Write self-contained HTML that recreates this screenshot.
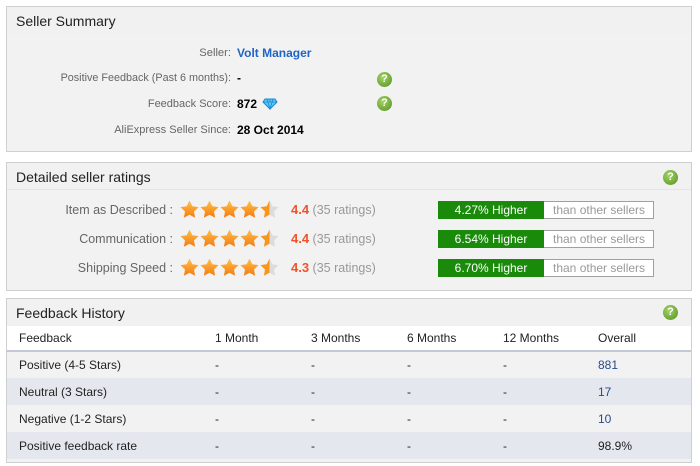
<!DOCTYPE html>
<html><head><meta charset="utf-8"><style>
*{margin:0;padding:0;box-sizing:border-box}
body{width:700px;height:466px;background:#fff;font-family:"Liberation Sans",Arial,sans-serif;position:relative;overflow:hidden}
.box{position:absolute;left:6px;width:686px;background:#f2f2f2;border:1px solid #cfcfcf}
.hd{height:27px;font-size:14px;color:#222;padding:6px 0 0 9px;background:#f1f1f1}
.a{position:absolute;font-size:12px;white-space:nowrap}
.lab{color:#666;text-align:right;width:300px;font-size:11px}
.q{position:absolute;width:15px;height:15px;border-radius:50%;background:radial-gradient(circle at 40% 35%,#a6d36a,#6aa431 70%,#558a25);color:#fff;font-size:11px;font-weight:bold;text-align:center;line-height:15px}
.bar{position:absolute;left:438px;height:18px;width:216px;border:1px solid #a0a0a0;background:#fff;font-size:12px}
.bar b{position:absolute;left:-1px;top:-1px;width:106px;height:18px;background:#1a8a0a;color:#fff;font-weight:normal;text-align:center;line-height:18px}
.bar span{position:absolute;left:114px;top:1px;color:#999}
.stars{position:absolute;left:180px}
.rl{color:#666;font-size:12.5px}
table{position:absolute;left:7px;top:326px;width:684px;border-collapse:collapse;font-size:12px;color:#222}
td{height:27px;padding:0 0 0 12px}
tr.h td{background:#fff;height:25px;border-bottom:2px solid #c2c8d6}
tr.s td{background:#e4e7ee}
</style></head><body>
<div class="box" style="top:6px;height:146px"><div class="hd">Seller Summary</div></div>
<div class="a lab" style="left:-69px;top:47px;font-size:11.2px">Seller:</div>
<div class="a" style="left:237px;top:46px;color:#1f64c4;font-weight:bold">Volt Manager</div>
<div class="a lab" style="left:-69px;top:72px;font-size:10.8px">Positive Feedback (Past 6 months):</div>
<div class="a" style="left:237px;top:71px;font-weight:bold">-</div>
<div class="a lab" style="left:-69px;top:98px">Feedback Score:</div>
<div class="a" style="left:237px;top:97px;font-weight:bold">872</div>
<svg style="position:absolute;left:262px;top:98px" width="16" height="12" viewBox="0 0 16 12"><path d="M3 1h10l2 3-7 7-7-7z" fill="#5cc8f5" stroke="#1a88d0"/><path d="M1 4h14M5 1l3 10 3-10M8 1v3" stroke="#1a88d0" fill="none" stroke-width=".8"/></svg>
<div class="a lab" style="left:-69px;top:124px">AliExpress Seller Since:</div>
<div class="a" style="left:237px;top:123px;font-weight:bold">28 Oct 2014</div>
<div class="q" style="left:377px;top:72px">?</div>
<div class="q" style="left:377px;top:96px">?</div>

<div class="box" style="top:162px;height:129px"><div class="hd" style="border-bottom:1px solid #e4e4e4">Detailed seller ratings</div></div>
<div class="q" style="left:663px;top:170px">?</div>
<svg width="0" height="0" style="position:absolute"><defs>
<linearGradient id="g" x1="0" y1="0" x2="0" y2="1"><stop offset="0" stop-color="#ffc04a"/><stop offset="1" stop-color="#f57a10"/></linearGradient>
<linearGradient id="h" x1="0" y1="0" x2="1" y2="0"><stop offset=".5" stop-color="#f8961c"/><stop offset=".5" stop-color="#dcdcdc"/></linearGradient>
<path id="st" d="M9.5 0.5l2.8 5.8 6.2.8-4.5 4.4 1.1 6.3-5.6-3-5.6 3 1.1-6.3L.5 7.1l6.2-.8z"/></defs></svg>

<div class="a lab rl" style="left:-127px;top:203px">Item as Described :</div>
<div class="a lab rl" style="left:-127px;top:232px">Communication :</div>
<div class="a lab rl" style="left:-127px;top:261px">Shipping Speed :</div>

<svg class="stars" style="top:200px" width="100" height="19"><use href="#st" fill="url(#g)"/><use href="#st" x="20" fill="url(#g)"/><use href="#st" x="40" fill="url(#g)"/><use href="#st" x="60" fill="url(#g)"/><use href="#st" x="80" fill="url(#h)"/></svg>
<svg class="stars" style="top:229px" width="100" height="19"><use href="#st" fill="url(#g)"/><use href="#st" x="20" fill="url(#g)"/><use href="#st" x="40" fill="url(#g)"/><use href="#st" x="60" fill="url(#g)"/><use href="#st" x="80" fill="url(#h)"/></svg>
<svg class="stars" style="top:258px" width="100" height="19"><use href="#st" fill="url(#g)"/><use href="#st" x="20" fill="url(#g)"/><use href="#st" x="40" fill="url(#g)"/><use href="#st" x="60" fill="url(#g)"/><use href="#st" x="80" fill="url(#h)"/></svg>

<div class="a" style="left:291px;top:202px;font-size:12.5px;color:#999"><b style="color:#f0532a;font-size:13px">4.4</b> (35 ratings)</div>
<div class="a" style="left:291px;top:231px;font-size:12.5px;color:#999"><b style="color:#f0532a;font-size:13px">4.4</b> (35 ratings)</div>
<div class="a" style="left:291px;top:260px;font-size:12.5px;color:#999"><b style="color:#f0532a;font-size:13px">4.3</b> (35 ratings)</div>

<div class="bar" style="top:201px"><b>4.27% Higher</b><span>than other sellers</span></div>
<div class="bar" style="top:230px"><b>6.54% Higher</b><span>than other sellers</span></div>
<div class="bar" style="top:259px"><b>6.70% Higher</b><span>than other sellers</span></div>

<div class="box" style="top:298px;height:165px"><div class="hd">Feedback History</div></div>
<div class="q" style="left:663px;top:305px">?</div>
<table>
<tr class="h"><td style="width:196px">Feedback</td><td style="width:96px">1 Month</td><td style="width:96px">3 Months</td><td style="width:96px">6 Months</td><td style="width:95px">12 Months</td><td>Overall</td></tr>
<tr><td>Positive (4-5 Stars)</td><td>-</td><td>-</td><td>-</td><td>-</td><td style="color:#2a4a8a">881</td></tr>
<tr class="s"><td>Neutral (3 Stars)</td><td>-</td><td>-</td><td>-</td><td>-</td><td style="color:#2a4a8a">17</td></tr>
<tr><td>Negative (1-2 Stars)</td><td>-</td><td>-</td><td>-</td><td>-</td><td style="color:#2a4a8a">10</td></tr>
<tr class="s"><td>Positive feedback rate</td><td>-</td><td>-</td><td>-</td><td>-</td><td>98.9%</td></tr>
</table>
</body></html>
